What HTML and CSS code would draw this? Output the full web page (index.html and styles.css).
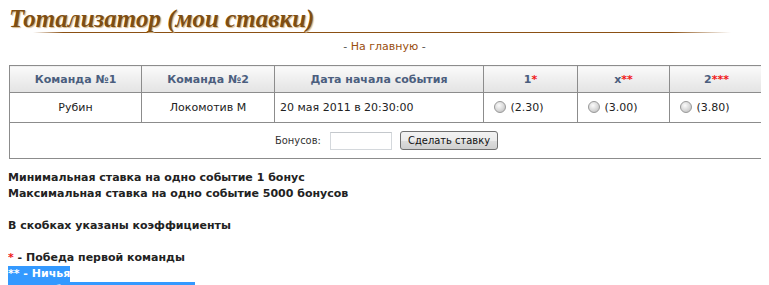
FILE: index.html
```html
<!DOCTYPE html>
<html>

<head>
    <title>Тотализатор (мои ставки)</title>
    <link rel="stylesheet" href="styles.css">
</head>

<body>
    <h1 class="page-title">Тотализатор (мои ставки)</h1>
    <div class="title-line"></div>
    <div class="back-link">- <a href="#">На главную</a> -</div>

    <form class="bet-form">
        <table class="bets">
            <tr>
                <th class="c1">Команда №1</th>
                <th class="c2">Команда №2</th>
                <th class="c3">Дата начала события</th>
                <th class="c4">1<span class="star">*</span></th>
                <th class="c5">x<span class="star">**</span></th>
                <th class="c6">2<span class="star">***</span></th>
            </tr>
            <tr class="event">
                <td class="center">Рубин</td>
                <td class="center">Локомотив М</td>
                <td>20 мая 2011 в 20:30:00</td>
                <td><label><input type="radio" name="bet" value="1"> (2.30)</label></td>
                <td><label><input type="radio" name="bet" value="x"> (3.00)</label></td>
                <td><label><input type="radio" name="bet" value="2"> (3.80)</label></td>
            </tr>
            <tr class="submit-row">
                <td colspan="6">
                    Бонусов: <input type="text" class="bonus" name="bonus">
                    <button type="button" class="make-bet">Сделать ставку</button>
                </td>
            </tr>
        </table>
    </form>

    <div class="rules">
        <p>Минимальная ставка на одно событие 1 бонус<br>Максимальная ставка на одно событие 5000 бонусов</p>
        <p>В скобках указаны коэффициенты</p>
        <p class="legend">
            <span class="line"><span class="star">*</span> - Победа первой команды</span>
            <span class="line selected">** - Ничья</span>
            <span class="line selected">*** - Победа второй команды</span>
        </p>
    </div>
</body>

</html>
```

FILE: styles.css
```css
body {
    margin: 8px;
    background: white;
    color: #222;
    font-family: "DejaVu Sans", Verdana, sans-serif;
    font-size: 11px;
}

.page-title {
    margin: 0;
    padding-left: 1px;
    font-family: "Liberation Serif", Georgia, serif;
    font-style: italic;
    font-weight: bold;
    font-size: 25px;
    line-height: 22px;
    color: #7e4e12;
    text-shadow: 1px 1px 1px #d6b98c;
}

.title-line {
    height: 1px;
    margin: 2px 30px 0 25px;
    background: linear-gradient(to right, rgba(139, 80, 20, 0) 0, #8b5014 30px, #8b5014 calc(100% - 60px), rgba(139, 80, 20, 0) 100%);
}

.back-link {
    margin-top: 7px;
    text-align: center;
    color: #555;
    line-height: 14px;
}

.back-link a {
    color: #9a4f10;
    text-decoration: none;
}

.bet-form {
    margin: 11px 0 0 1px;
}

.bets {
    width: 755px;
    border-collapse: collapse;
    border: 1px solid #8c8c8c;
}

.bets th,
.bets td {
    border: 1px solid #8c8c8c;
    padding: 0 5px;
}

.bets th {
    height: 26px;
    background: linear-gradient(#fafafa, #e3e3e3);
    color: #4b5e7e;
    font-weight: bold;
    text-align: center;
}

.c1 { width: 121px; }
.c2 { width: 122px; }
.c3 { width: 198px; }
.c4 { width: 83px; }
.c5 { width: 81px; }

.star {
    color: #f01818;
}

.event td {
    height: 29px;
}

.center {
    text-align: center;
}

.event input[type="radio"] {
    appearance: none;
    width: 12px;
    height: 12px;
    margin: 0 1px 0 5px;
    vertical-align: -2px;
    border: 1px solid #9a9a9a;
    border-radius: 50%;
    background: radial-gradient(circle at 40% 35%, #fbfbfb 0, #d8d8d8 55%, #b4b4b4 100%);
}

.submit-row td {
    height: 35px;
    text-align: center;
    color: #333;
    font-family: "DejaVu Sans Condensed", "DejaVu Sans", sans-serif;
}

.bonus {
    width: 60px;
    height: 16px;
    margin: 0 4px 0 6px;
    padding: 0;
    border: 1px solid #d4d8dc;
    border-top-color: #c4c8cc;
    vertical-align: middle;
}

.make-bet {
    height: 19px;
    padding: 0 7px;
    margin-left: 1px;
    border: 1px solid #707070;
    border-radius: 3px;
    background: linear-gradient(#f2f2f2 0, #ebebeb 50%, #dddddd 51%, #cfcfcf 100%);
    font-family: "DejaVu Sans Condensed", "DejaVu Sans", sans-serif;
    font-size: 11px;
    color: #111;
    vertical-align: middle;
}

.rules {
    margin-top: 11px;
    font-weight: bold;
    line-height: 16px;
}

.rules p {
    margin: 0 0 16px;
}

.legend .line {
    display: table;
}

.selected {
    background: #3399ff;
    color: white;
}
```
